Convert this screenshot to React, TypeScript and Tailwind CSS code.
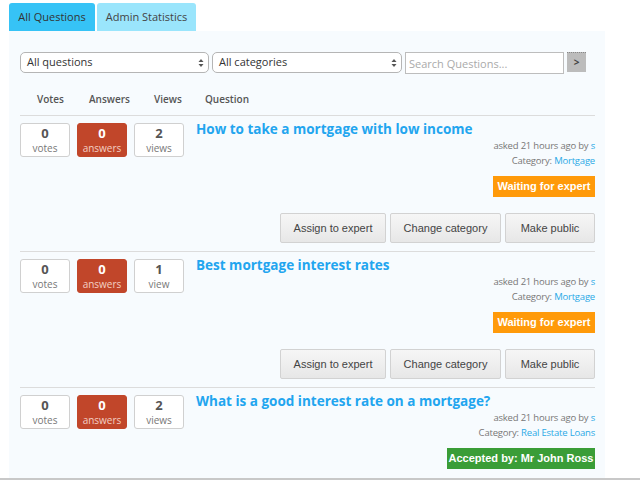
import React from "react";

type Row = {
  votes: number;
  answers: number;
  views: number;
  title: string;
  category: string;
  status: "waiting" | "accepted";
  actions: boolean;
};

const rows: Row[] = [
  { votes: 0, answers: 0, views: 2, title: "How to take a mortgage with low income", category: "Mortgage", status: "waiting", actions: true },
  { votes: 0, answers: 0, views: 1, title: "Best mortgage interest rates", category: "Mortgage", status: "waiting", actions: true },
  { votes: 0, answers: 0, views: 2, title: "What is a good interest rate on a mortgage?", category: "Real Estate Loans", status: "accepted", actions: false },
];

const SelectBox = ({ label, width }: { label: string; width: string }) => (
  <div className={`${width} h-[21px] bg-white border border-[#b5b5b5] rounded-[5px] flex items-center justify-between pl-[6px] pr-[4px] text-[11px] text-[#333]`}>
    <span>{label}</span>
    <svg width="6" height="10" viewBox="0 0 6 10">
      <path d="M3 1 L5.5 4 H0.5 Z" fill="#555" />
      <path d="M3 9 L5.5 6 H0.5 Z" fill="#555" />
    </svg>
  </div>
);

const StatBox = ({ n, label, red }: { n: number; label: string; red?: boolean }) => (
  <div
    className={`w-[50px] h-[34px] rounded-[3px] flex flex-col items-center justify-center ${
      red ? "bg-[#c1462a] border border-[#c1462a]" : "bg-white border border-[#d0d0d0]"
    }`}
  >
    <span className={`text-[13px] font-bold leading-[15px] ${red ? "text-white" : "text-[#555]"}`}>{n}</span>
    <span className={`text-[10px] leading-[14px] ${red ? "text-[#f3cfc4]" : "text-[#777]"}`}>{label}</span>
  </div>
);

const ActionButton = ({ label, width }: { label: string; width: string }) => (
  <button
    className={`${width} h-[30px] rounded-[2px] border border-[#d2d2d2] bg-gradient-to-b from-[#f6f6f6] to-[#e7e7e7] text-[11px] text-[#444] font-['Liberation_Sans',Arial,sans-serif]`}
  >
    {label}
  </button>
);

const QuestionRow = ({ row, last }: { row: Row; last: boolean }) => (
  <div className={`flex pt-[7px] ${last ? "" : "pb-[8px] border-b border-[#dcdcdc]"}`}>
    <div className="flex gap-[7px] w-[176px] shrink-0">
      <StatBox n={row.votes} label="votes" />
      <StatBox n={row.answers} label="answers" red />
      <StatBox n={row.views} label={row.views === 1 ? "view" : "views"} />
    </div>
    <div className="flex-1 flex flex-col">
      <div className="text-[13.5px] font-bold text-[#22a5ef] leading-[17px] -mt-[2px]">{row.title}</div>
      <div className="text-right text-[9.5px] tracking-[-0.2px] text-[#777] leading-[15px]">
        asked 21 hours ago by <span className="text-[#2aa9e6]">s</span>
      </div>
      <div className="text-right text-[9.5px] tracking-[-0.2px] text-[#777] leading-[15px]">
        Category: <span className="text-[#2aa9e6]">{row.category}</span>
      </div>
      <div className="flex justify-end mt-[8px]">
        {row.status === "waiting" ? (
          <div className="w-[102px] h-[21px] bg-[#ff9a0a] text-white text-[11px] font-bold flex items-center justify-center font-['Liberation_Sans',Arial,sans-serif]">
            Waiting for expert
          </div>
        ) : (
          <div className="w-[148px] h-[21px] bg-[#3a9d37] text-white text-[11px] font-bold flex items-center justify-center font-['Liberation_Sans',Arial,sans-serif]">
            Accepted by: Mr John Ross
          </div>
        )}
      </div>
      {row.actions && (
        <div className="flex justify-end gap-[4px] mt-[16px]">
          <ActionButton label="Assign to expert" width="w-[106px]" />
          <ActionButton label="Change category" width="w-[111px]" />
          <ActionButton label="Make public" width="w-[90px]" />
        </div>
      )}
    </div>
  </div>
);

export default function App() {
  return (
    <div className="w-[640px] h-[480px] bg-white overflow-hidden font-['Open_Sans',sans-serif] border-b-[2px] border-[#c8c8c8]">
      <div className="flex gap-[2px] pl-[9px] pt-[3px]">
        <div className="w-[86px] h-[28px] bg-[#36c3f6] rounded-t-[3px] text-[11px] text-[#333] flex items-center justify-center">
          All Questions
        </div>
        <div className="w-[99px] h-[28px] bg-[#9ae5fc] rounded-t-[3px] text-[11px] text-[#444] flex items-center justify-center">
          Admin Statistics
        </div>
      </div>
      <div className="ml-[9px] w-[596px] h-[447px] bg-[#f7fbfe] px-[11px] pt-[21px]">
        <div className="flex items-start">
          <SelectBox label="All questions" width="w-[189px]" />
          <div className="w-[3px]" />
          <SelectBox label="All categories" width="w-[190px]" />
          <div className="w-[3px]" />
          <input
            placeholder="Search Questions..."
            className="w-[159px] h-[22px] bg-white border border-[#bdbdbd] px-[3px] text-[11px] text-[#333] placeholder:text-[#aaa] outline-none"
          />
          <div className="w-[3px]" />
          <button className="w-[19px] h-[20px] bg-[#bcbcbc] border-t border-dotted border-[#888] text-[10px] text-[#444] font-bold flex items-center justify-center">
            &gt;
          </button>
        </div>
        <div className="flex items-start h-[42px] pt-[18px] leading-[14px] border-b border-[#dcdcdc] text-[10px] font-semibold text-[#555] pl-[17px] w-[575px]">
          <span className="w-[52px]">Votes</span>
          <span className="w-[65px]">Answers</span>
          <span className="w-[51px]">Views</span>
          <span>Question</span>
        </div>
        <div className="w-[575px]">
          {rows.map((r, i) => (
            <QuestionRow key={i} row={r} last={i === rows.length - 1} />
          ))}
        </div>
      </div>
    </div>
  );
}
